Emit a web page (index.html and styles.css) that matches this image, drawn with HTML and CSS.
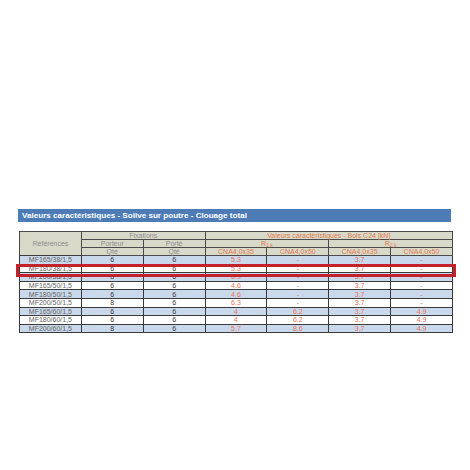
FILE: index.html
```html
<!DOCTYPE html>
<html lang="fr">
<head>
<meta charset="utf-8">
<link rel="stylesheet" href="styles.css">
</head>
<body>
<div class="page">
  <div class="title">Valeurs caractéristiques - Solive sur poutre - Clouage total</div>
  <div class="wrap">
    <table class="grid">
      <colgroup>
        <col class="c"><col class="c"><col class="c"><col class="c"><col class="c"><col class="c"><col class="c">
      </colgroup>
      <thead>
        <tr>
          <th rowspan="3" class="ref">Références</th>
          <th colspan="2">Fixations</th>
          <th colspan="4" class="or">Valeurs caractéristiques - Bois C24 [kN]</th>
        </tr>
        <tr>
          <th>Porteur</th>
          <th>Porté</th>
          <th colspan="2" class="or">R<sub>1,k</sub></th>
          <th colspan="2" class="or">R<sub>2,k</sub></th>
        </tr>
        <tr>
          <th>Qté</th>
          <th>Qté</th>
          <th class="or">CNA4,0x35</th>
          <th class="or">CNA4,0x50</th>
          <th class="or">CNA4,0x35</th>
          <th class="or">CNA4,0x50</th>
        </tr>
      </thead>
      <tbody>
        <tr class="b"><td class="r">MF165/38/1,5</td><td>6</td><td>6</td><td class="v">5.3</td><td class="v">-</td><td class="v">3.7</td><td class="v">-</td></tr>
        <tr class="w"><td class="r">MF180/38/1,5</td><td>6</td><td>6</td><td class="v">5.3</td><td class="v">-</td><td class="v">3.7</td><td class="v">-</td></tr>
        <tr class="b"><td class="r">MF200/38/1,5</td><td>8</td><td>6</td><td class="v">6.9</td><td class="v">-</td><td class="v">3.7</td><td class="v">-</td></tr>
        <tr class="w"><td class="r">MF165/50/1,5</td><td>6</td><td>6</td><td class="v">4.6</td><td class="v">-</td><td class="v">3.7</td><td class="v">-</td></tr>
        <tr class="b"><td class="r">MF180/50/1,5</td><td>6</td><td>6</td><td class="v">4.6</td><td class="v">-</td><td class="v">3.7</td><td class="v">-</td></tr>
        <tr class="w"><td class="r">MF200/50/1,5</td><td>8</td><td>6</td><td class="v">6.3</td><td class="v">-</td><td class="v">3.7</td><td class="v">-</td></tr>
        <tr class="b"><td class="r">MF165/60/1,5</td><td>6</td><td>6</td><td class="v">4</td><td class="v">6.2</td><td class="v">3.7</td><td class="v">4.9</td></tr>
        <tr class="w"><td class="r">MF180/60/1,5</td><td>6</td><td>6</td><td class="v">4</td><td class="v">6.2</td><td class="v">3.7</td><td class="v">4.9</td></tr>
        <tr class="b"><td class="r">MF200/60/1,5</td><td>8</td><td>6</td><td class="v">5.7</td><td class="v">8.6</td><td class="v">3.7</td><td class="v">4.9</td></tr>
      </tbody>
    </table>
    <div class="highlight"></div>
  </div>
</div>
</body>
</html>
```

FILE: styles.css
```css
html, body {
  margin: 0;
  padding: 0;
  background: #ffffff;
}
.page {
  padding: 209px 18px 0 18px;
  width: 434px;
  font-family: "Liberation Sans", Arial, sans-serif;
}
.title {
  height: 13px;
  background: #4d7bb6;
  color: #ffffff;
  font-weight: bold;
  font-size: 8.1px;
  line-height: 13px;
  padding-left: 4px;
  width: 429px;
}
.wrap {
  position: relative;
  margin-top: 9px;
  margin-left: 1px;
}
.grid {
  border-collapse: collapse;
  table-layout: fixed;
  width: 433px;
  border: 1px solid #3a3a3a;
  font-size: 7px;
}
.grid col.c {
  width: 61.857px;
}
.grid th {
  background: #d9d9c9;
  color: #8d8d8d;
  font-weight: normal;
  height: 7px;
  line-height: 7px;
  padding: 0;
  border: 1px solid #4a4a4a;
  text-align: center;
  white-space: nowrap;
}
.grid th.ref {
  border-bottom: 1px solid #3a3a3a;
}
.grid th.or {
  color: #e07a4f;
}
.grid sub {
  font-size: 5px;
  line-height: 0;
  vertical-align: -1px;
}
.grid td {
  height: 7.6px;
  line-height: 7px;
  padding: 0;
  border: 1px solid #3a3a3a;
  text-align: center;
  color: #3a3a3a;
  white-space: nowrap;
}
.grid td.r {
  color: #666666;
}
.grid td.v {
  color: #e8735a;
}
.grid tr.b td {
  background: #c9d8ea;
}
.grid tr.w td {
  background: #ffffff;
}
.highlight {
  position: absolute;
  left: -3px;
  top: 33px;
  width: 434px;
  height: 7px;
  border: 3px solid #c4222b;
}
```
